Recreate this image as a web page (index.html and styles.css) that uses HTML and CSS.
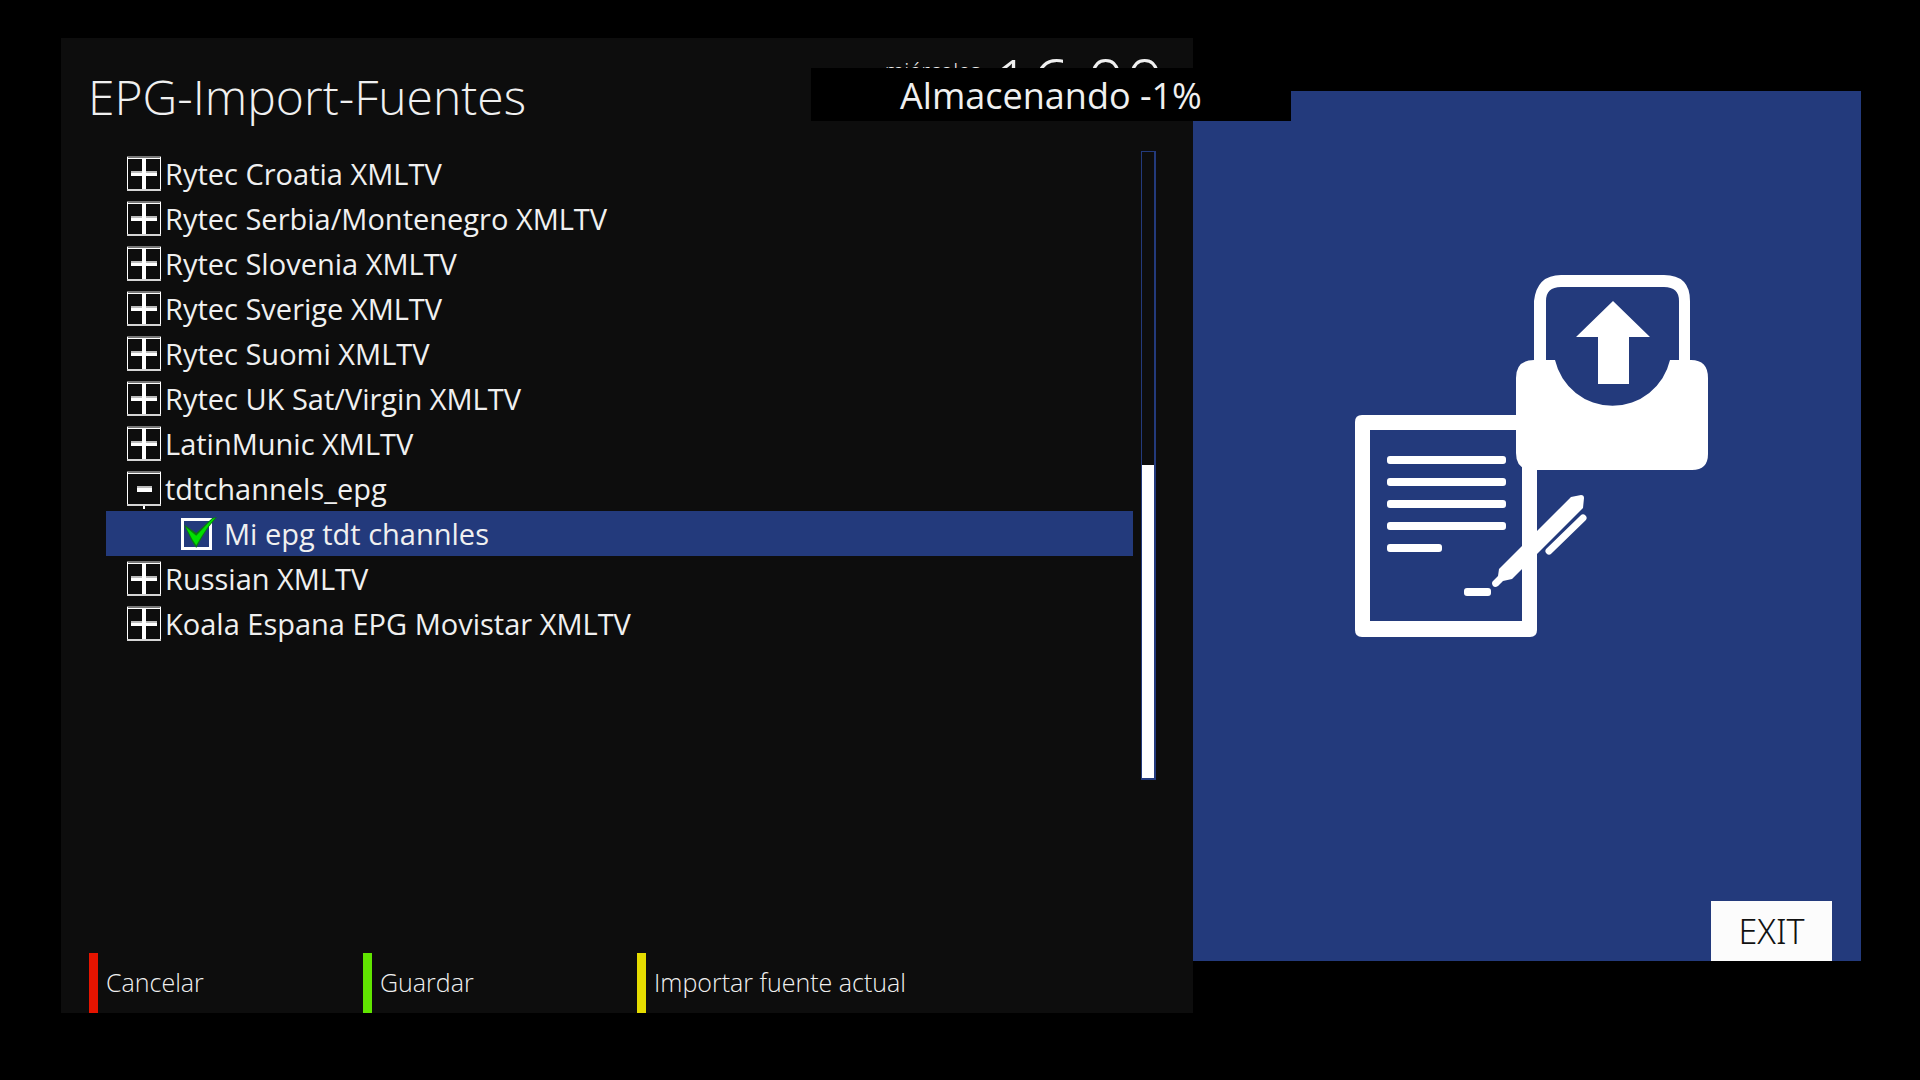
FILE: index.html
```html
<!DOCTYPE html>
<html lang="es">
<head>
<meta charset="utf-8">
<title>EPG-Import-Fuentes</title>
<link rel="stylesheet" href="styles.css">
</head>
<body>
<svg class="defs" aria-hidden="true">
  <symbol id="plus" viewBox="0 0 34 36">
    <path fill="#777" d="M0 0h34v2H0z"/>
    <path fill="#fff" d="M0 1h1v34H0zM33 1h1v34h-1zM15 2h4v33h-4z"/>
    <path fill="#d5d5d5" d="M0 33h34v2H0z"/>
    <path fill="#bbb" d="M4 15h11v2H4zM19 15h11v2H19z"/>
    <path fill="#fff" d="M4 17h26v3H4zM1 2h32v1H1z"/>
  </symbol>
  <symbol id="minus" viewBox="0 0 34 36" overflow="visible">
    <path fill="#777" d="M0 0h34v2H0z"/>
    <path fill="#fff" d="M0 1h1v34H0zM33 1h1v34h-1zM1 2h32v1H1zM16 35h2v3h-2z"/>
    <path fill="#d5d5d5" d="M0 33h34v2H0z"/>
    <path fill="#bbb" d="M10 15h15v2H10z"/>
    <path fill="#fff" d="M10 17h15v4H10z"/>
  </symbol>
</svg>
<div class="screen">
  <main class="panel">
    <header class="header">
      <h1 class="title">EPG-Import-Fuentes</h1>
      <div class="datetime"><span class="day">miércoles</span><time class="clock">16:00</time></div>
    </header>
    <div class="content">
      <ul class="list">
        <li><button class="row"><svg class="expander"><use href="#plus"/></svg>Rytec Croatia XMLTV</button></li>
        <li><button class="row"><svg class="expander"><use href="#plus"/></svg>Rytec Serbia/Montenegro XMLTV</button></li>
        <li><button class="row"><svg class="expander"><use href="#plus"/></svg>Rytec Slovenia XMLTV</button></li>
        <li><button class="row"><svg class="expander"><use href="#plus"/></svg>Rytec Sverige XMLTV</button></li>
        <li><button class="row"><svg class="expander"><use href="#plus"/></svg>Rytec Suomi XMLTV</button></li>
        <li><button class="row"><svg class="expander"><use href="#plus"/></svg>Rytec UK Sat/Virgin XMLTV</button></li>
        <li><button class="row"><svg class="expander"><use href="#plus"/></svg>LatinMunic XMLTV</button></li>
        <li><button class="row"><svg class="expander"><use href="#minus"/></svg>tdtchannels_epg</button></li>
        <li class="row child">
          <span class="check">
            <input class="box" type="checkbox" id="mi-epg" checked>
            <svg class="tick" viewBox="0 0 36 34" aria-hidden="true"><path fill="#0a7a10" d="M1 8 14 17 31 1l5-1-9 11-7 11-6 11-5-8z"/><path fill="#00e000" d="M3 11 14 20 31 2l3-1-8 10-6 9-6 10-4-6z"/></svg>
          </span>
          <label for="mi-epg">Mi epg tdt channles</label>
        </li>
        <li><button class="row"><svg class="expander"><use href="#plus"/></svg>Russian XMLTV</button></li>
        <li><button class="row"><svg class="expander"><use href="#plus"/></svg>Koala Espana EPG Movistar XMLTV</button></li>
      </ul>
      <div class="scrollbar"><div class="thumb"></div></div>
    </div>
    <footer class="footer">
      <button class="key red">Cancelar</button>
      <button class="key green">Guardar</button>
      <button class="key yellow">Importar fuente actual</button>
    </footer>
  </main>
  <aside class="side">
    <svg class="art" viewBox="0 0 354 362" aria-hidden="true">
      <g fill="#fff">
        <path fill-rule="evenodd" d="M7 140H182V355Q182 362 175 362H7Q0 362 0 355V147Q0 140 7 140ZM15 155V346H167V155Z"/>
        <path d="M179 85V26Q182 0 206 0H309Q335 0 335 26V85h1Q353 85 353 103V179Q353 195 337 195H178Q161 195 161 178V103Q161 85 179 85ZM191 85h9A59 59 0 0 0 315 85h9V26Q324 12 309 12H206Q191 12 191 26Z" fill-rule="evenodd"/>
        <path d="M258 26 295 62H274V109H243V62H221Z"/>
        <rect x="32" y="181" width="119" height="8" rx="3"/>
        <rect x="32" y="203" width="119" height="8" rx="3"/>
        <rect x="32" y="225" width="119" height="8" rx="3"/>
        <rect x="32" y="247" width="119" height="8" rx="3"/>
        <rect x="32" y="269" width="55" height="8" rx="3"/>
        <rect x="109" y="313" width="27" height="8" rx="3"/>
        <path d="M216 222 226 220Q229 220 229 223L228 233 157 304 148 306 143 311Q140 313 138 311 136 308 138 306L143 301 144 294Z"/>
        <path d="M194 276 228 243" stroke="#fff" stroke-width="7" stroke-linecap="round"/>
      </g>
    </svg>
    <button class="exit">EXIT</button>
  </aside>
  <div class="toast" role="status">Almacenando -1%</div>
</div>
</body>
</html>
```
FILE: styles.css
```css
* { box-sizing: border-box; }

body {
  margin: 0;
  background: #000;
  color: #f0f0f0;
  font-family: "Open Sans", "Noto Sans", sans-serif;
}

button {
  margin: 0;
  border: 0;
  background: none;
  color: inherit;
  font: inherit;
  cursor: pointer;
}

.defs { display: none; }

.screen {
  position: relative;
  display: grid;
  grid-template-columns: minmax(0, 1132fr) minmax(0, 668fr);
  min-height: 100vh;
  padding: 38px 59px 67px 61px;
}

.panel {
  display: flex;
  flex-direction: column;
  background: #0d0d0d;
}

.header {
  display: flex;
  justify-content: space-between;
  height: 113px;
  padding: 0 29px 0 27px;
}

.title {
  margin: 24px 0 0;
  font-size: 48px;
  font-weight: 300;
  line-height: 70px;
  white-space: nowrap;
}

.datetime {
  display: flex;
  gap: 12px;
  font-weight: 300;
}

.day {
  margin-top: 16px;
  font-size: 22px;
  line-height: 32px;
}

.clock {
  margin-top: 5px;
  font-size: 68px;
  line-height: 80px;
}

.content {
  flex: 1;
  display: flex;
  gap: 8px;
  margin-bottom: 173px;
  padding: 0 37px 0 45px;
}

.list {
  flex: 1;
  margin: 0;
  padding: 0;
  list-style: none;
}

.row {
  display: flex;
  align-items: center;
  gap: 4px;
  width: 100%;
  height: 45px;
  padding: 0 21px;
  font-size: 29px;
  line-height: 40px;
  text-align: left;
  white-space: nowrap;
}

.expander {
  width: 34px;
  height: 36px;
  overflow: visible;
}

.child {
  gap: 12px;
  padding-left: 75px;
  background: #233a7c;
}

.check {
  position: relative;
  display: flex;
}

.box {
  appearance: none;
  width: 31px;
  height: 32px;
  margin: 0;
  border: 3px solid #fff;
}

.tick {
  position: absolute;
  left: 1px;
  top: -1px;
  width: 36px;
  height: 32px;
  pointer-events: none;
}

.scrollbar {
  display: flex;
  flex-direction: column;
  justify-content: flex-end;
  width: 15px;
  border: solid #233a7c;
  border-width: 1px 2px 2px 1px;
}

.thumb {
  height: 50%;
  background: #fff;
}

.footer {
  display: flex;
  padding-left: 28px;
}

.key {
  width: 274px;
  height: 60px;
  padding: 0 0 2px 8px;
  border-left: 9px solid;
  font-size: 25px;
  font-weight: 300;
  text-align: left;
  white-space: nowrap;
}

.red { border-color: #e51400; }
.green { border-color: #60e500; }
.yellow { border-color: #e5dc00; }

.side {
  display: flex;
  flex-direction: column;
  justify-content: space-between;
  margin: 53px 0 52px;
  padding: 184px 29px 0;
  background: #233a7c;
}

.art {
  align-self: center;
  width: 354px;
  height: 362px;
  margin-left: 10px;
}

.exit {
  align-self: flex-end;
  width: 121px;
  height: 60px;
  padding: 0;
  background: #fcfcfc;
  color: #111;
  font-family: "Noto Sans", sans-serif;
  font-size: 34px;
  font-weight: 300;
}

.toast {
  position: absolute;
  left: 811px;
  top: 68px;
  width: 480px;
  height: 53px;
  background: #000;
  font-size: 36px;
  line-height: 55px;
  text-align: center;
}
```
